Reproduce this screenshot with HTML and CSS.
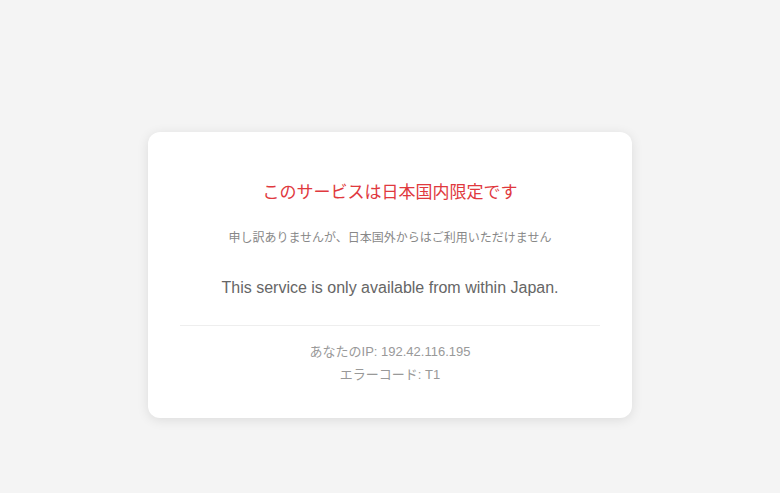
FILE: index.html
```html
<!DOCTYPE html>
<html lang="ja">

<head>
    <meta charset="UTF-8">
    <meta name="viewport" content="width=device-width, initial-scale=1.0">
    <title>アクセス制限</title>
    <link rel="stylesheet" href="styles.css">
</head>

<body>
    <div class="card">
        <h1 class="title">このサービスは日本国内限定です</h1>
        <p class="subtitle">申し訳ありませんが、日本国外からはご利用いただけません</p>
        <p class="message">This service is only available from within Japan.</p>
        <div class="divider"></div>
        <div class="info">
            <div class="info-line">あなたのIP: 192.42.116.195</div>
            <div class="info-line">エラーコード: T1</div>
        </div>
    </div>
</body>

</html>
```

FILE: styles.css
```css
body {
    margin: 8px;
    padding: 20px;
    min-height: 100vh;
    background-color: #f4f4f4;
    display: flex;
    align-items: center;
    justify-content: center;
    font-family: 'Liberation Sans', Arial, 'Noto Sans CJK JP', sans-serif;
}

::-webkit-scrollbar {
    width: 15px;
    background: #fafafa;
}

::-webkit-scrollbar-thumb {
    background: #8a8a8a;
    border-radius: 8px;
    border: 4px solid #fafafa;
    border-top-width: 16px;
    border-bottom-width: 16px;
}

.card {
    width: 100%;
    max-width: 420px;
    background: white;
    padding: 39px 32px 33px;
    border-radius: 12px;
    box-shadow: 0 2px 12px rgba(0, 0, 0, 0.1);
    text-align: center;
}

.title {
    margin: 8px 0 0;
    font-size: 17px;
    line-height: 28px;
    font-weight: normal;
    color: #e0393e;
}

.subtitle {
    margin: 21px 0 0;
    font-size: 12px;
    line-height: 20px;
    color: #888;
}

.message {
    margin: 28px 0 0;
    font-size: 16px;
    line-height: 24px;
    color: #666;
}

.divider {
    margin-top: 25px;
    border-top: 1px solid #eee;
}

.info {
    margin-top: 16px;
    display: flex;
    flex-direction: column;
    gap: 3px;
}

.info-line {
    font-size: 13px;
    line-height: 20px;
    color: #999;
}
```
